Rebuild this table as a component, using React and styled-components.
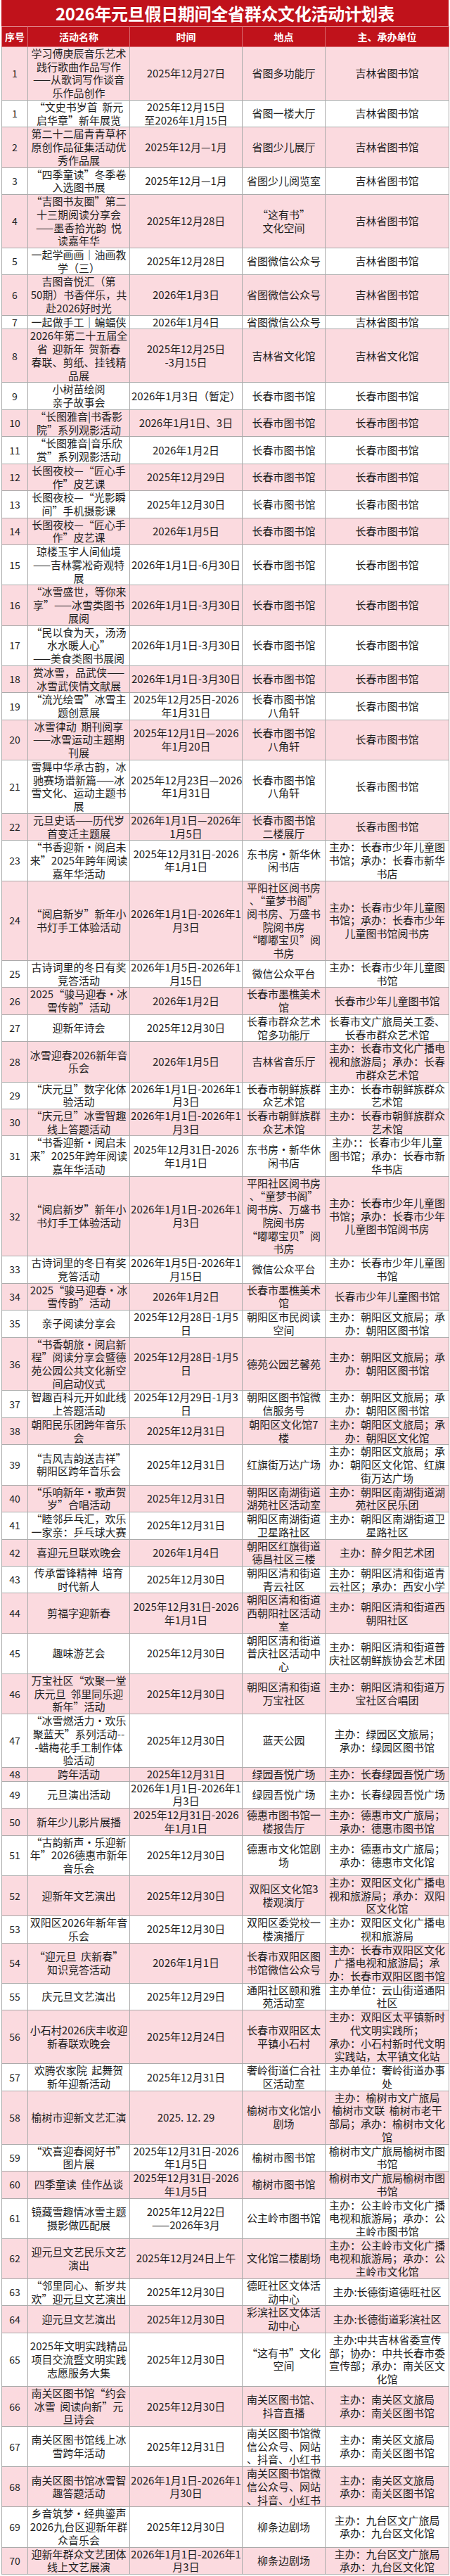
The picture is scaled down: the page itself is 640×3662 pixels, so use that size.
import React from "react";
import styled, { createGlobalStyle } from "styled-components";

const Global = createGlobalStyle`
  html, body { margin: 0; padding: 0; background: #ffffff; }
  body { font-family: "Noto Sans CJK SC", "Noto Sans", sans-serif; color: #1c1c1c; }
`;

const Page = styled.div`
  width: 640px;
  padding: 0 2px 3px 2px;
  box-sizing: border-box;
`;

const Title = styled.div`
  height: 37px;
  line-height: 37px;
  background: #c0121b;
  color: #ffffff;
  text-align: center;
  font-family: "Noto Sans CJK SC", sans-serif;
  font-weight: 700;
  font-size: 24px;
  letter-spacing: -0.3px;
  white-space: nowrap;
`;

const Table = styled.table`
  width: 636px;
  table-layout: fixed;
  border-collapse: collapse;
  font-family: "Noto Sans CJK SC", "Noto Sans", sans-serif;
`;

const HeadCell = styled.th`
  height: 28px;
  padding: 0;
  background: #c0121b;
  color: #ffffff;
  font-size: 14px;
  font-weight: 700;
  text-align: center;
  vertical-align: middle;
  border: 1px solid #d86a70;
  border-top: 1px solid #e08a8f;
  white-space: nowrap;
`;

const Row = styled.tr`
  background: ${(p) => (p.$pink ? "#fbdadf" : "#ffffff")};
`;

const Cell = styled.td`
  padding: 0 1px;
  font-size: 15px;
  line-height: 18.74px;
  text-align: center;
  vertical-align: middle;
  white-space: pre;
  overflow: visible;
  border: 1px solid #ababab;
  color: #1e1e1e;
`;

const NumCell = styled(Cell)`
  font-size: 14px;
`;

const CBK = "长春市图书馆";
const JL = "吉林省图书馆";
const T_24 = [
  "“阅启新岁”新年小\n书灯手工体验活动",
  "2026年1月1日-2026年1\n月3日",
  "平阳社区阅书房\n、“童梦书阁”\n阅书房、万盛书\n院阅书房\n“嘟嘟宝贝”阅\n书房",
  "主办：长春市少年儿童图\n书馆；承办：长春市少年\n儿童图书馆阅书房",
];
const T_25 = [
  "古诗词里的冬日有奖\n竞答活动",
  "2026年1月5日-2026年1\n月15日",
  "微信公众平台",
  "主办：长春市少年儿童图\n书馆",
];
const T_26 = [
  "2025“骏马迎春·冰\n雪传韵”活动",
  "2026年1月2日",
  "长春市墨樵美术\n馆",
  "长春市少年儿童图书馆",
];
const CY = "主办：朝阳区文旅局；承\n办：朝阳区图书馆";
const NG_PLACE = "南关区图书馆微\n信公众号、网站\n、抖音、小红书";
const NG_ORG = "主办：南关区文旅局\n承办：南关区图书馆";
const YS_ORG = "榆树市文广旅局榆树市图\n书馆";
const JT_ORG = "主办：九台区文广旅局\n承办：九台区文化馆";

const rows = [
  ["1", "学习傅庚辰音乐艺术\n践行歌曲作品写作\n——从歌词写作谈音\n乐作品创作", "2025年12月27日", "省图多功能厅", JL],
  ["1", "“文史书岁首  新元\n启华章”新年展览", "2025年12月15日\n至2026年1月15日", "省图一楼大厅", JL],
  ["2", "第二十二届青青草杯\n原创作品征集活动优\n秀作品展", "2025年12月—1月", "省图少儿展厅", JL],
  ["3", "“四季童读”冬季卷\n入选图书展", "2025年12月—1月", "省图少儿阅览室", JL],
  ["4", "“吉图书友圈”第二\n十三期阅读分享会\n——墨香拾光韵  悦\n读嘉年华", "2025年12月28日", "“这有书”\n文化空间", JL],
  ["5", "一起学画画｜油画教\n学（三）", "2025年12月28日", "省图微信公众号", JL],
  ["6", "吉图音悦汇（第\n50期）书香伴乐，共\n赴2026好时光", "2026年1月3日", "省图微信公众号", JL],
  ["7", "一起做手工｜蝙蝠侠", "2026年1月4日", "省图微信公众号", JL],
  ["8", "2026年第二十五届全\n省  迎新年  贺新春\n春联、剪纸、挂钱精\n品展", "2025年12月25日\n-3月15日", "吉林省文化馆", "吉林省文化馆"],
  ["9", "小树苗绘阅\n亲子故事会", "2026年1月3日（暂定）", CBK, CBK],
  ["10", "“长图雅音|书香影\n院”系列观影活动", "2026年1月1日、3日", CBK, CBK],
  ["11", "“长图雅音|音乐欣\n赏”系列观影活动", "2026年1月2日", CBK, CBK],
  ["12", "长图夜校—“匠心手\n作”皮艺课", "2025年12月29日", CBK, CBK],
  ["13", "长图夜校—“光影瞬\n间”手机摄影课", "2025年12月30日", CBK, CBK],
  ["14", "长图夜校—“匠心手\n作”皮艺课", "2026年1月5日", CBK, CBK],
  ["15", "琼楼玉宇人间仙境\n——吉林雾凇奇观特\n展", "2026年1月1日-6月30日", CBK, CBK],
  ["16", "“冰雪盛世，等你来\n享”——冰雪类图书\n展阅", "2026年1月1日-3月30日", CBK, CBK],
  ["17", "“民以食为天，汤汤\n水水暖人心”\n——美食类图书展阅", "2026年1月1日-3月30日", CBK, CBK],
  ["18", "赏冰雪，品武侠——\n冰雪武侠情文献展", "2026年1月1日-3月30日", CBK, CBK],
  ["19", "“流光绘雪”冰雪主\n题创意展", "2025年12月25日-2026\n年1月31日", "长春市图书馆\n八角轩", CBK],
  ["20", "冰雪律动  期刊阅享\n——冰雪运动主题期\n刊展", "2025年12月1日—2026\n年1月20日", "长春市图书馆\n八角轩", CBK],
  ["21", "雪舞中华承古韵，冰\n驰赛场谱新篇——冰\n雪文化、运动主题书\n展", "2025年12月23日—2026\n年1月31日", "长春市图书馆\n八角轩", CBK],
  ["22", "元旦史话——历代岁\n首变迁主题展", "2026年1月1日—2026年\n1月5日", "长春市图书馆\n二楼展厅", CBK],
  ["23", "“书香迎新·阅启未\n来”2025年跨年阅读\n嘉年华活动", "2025年12月31日-2026\n年1月1日", "东书房·新华休\n闲书店", "主办：长春市少年儿童图\n书馆；承办：长春市新华\n书店"],
  ["24", ...T_24],
  ["25", ...T_25],
  ["26", ...T_26],
  ["27", "迎新年诗会", "2025年12月30日", "长春市群众艺术\n馆多功能厅", "长春市文广旅局关工委、\n长春市群众艺术馆"],
  ["28", "冰雪迎春2026新年音\n乐会", "2026年1月5日", "吉林省音乐厅", "主办：长春市文化广播电\n视和旅游局；承办：长春\n市群众艺术馆"],
  ["29", "“庆元旦”数字化体\n验活动", "2026年1月1日-2026年1\n月3日", "长春市朝鲜族群\n众艺术馆", "主办：长春市朝鲜族群众\n艺术馆"],
  ["30", "“庆元旦”冰雪智趣\n线上答题活动", "2026年1月1日-2026年1\n月3日", "长春市朝鲜族群\n众艺术馆", "主办：长春市朝鲜族群众\n艺术馆"],
  ["31", "“书香迎新·阅启未\n来”2025年跨年阅读\n嘉年华活动", "2025年12月31日-2026\n年1月1日", "东书房·新华休\n闲书店", "主办：：长春市少年儿童\n图书馆；承办：长春市新\n华书店"],
  ["32", ...T_24],
  ["33", ...T_25],
  ["34", ...T_26],
  ["35", "亲子阅读分享会", "2025年12月28日-1月5\n日", "朝阳区市民阅读\n空间", CY],
  ["36", "“书香朝旅·阅启新\n程”阅读分享会暨德\n苑公园公共文化新空\n间启动仪式", "2025年12月28日-1月5\n日", "德苑公园艺馨苑", CY],
  ["37", "智趣百科元开如此线\n上答题活动", "2025年12月29日-1月3\n日", "朝阳区图书馆微\n信服务号", CY],
  ["38", "朝阳民乐团跨年音乐\n会", "2025年12月31日", "朝阳区文化馆7\n楼", "主办：朝阳区文旅局；承\n办：朝阳区文化馆"],
  ["39", "“吉风吉韵送吉祥”\n朝阳区跨年音乐会", "2025年12月31日", "红旗街万达广场", "主办：朝阳区文旅局；承\n办：朝阳区文化馆、红旗\n街万达广场"],
  ["40", "“乐响新年·歌声贺\n岁”合唱活动", "2025年12月31日", "朝阳区南湖街道\n湖苑社区活动室", "主办：朝阳区南湖街道湖\n苑社区民乐团"],
  ["41", "“睦邻乒乓汇，欢乐\n一家亲：乒乓球大赛", "2025年12月31日", "朝阳区南湖街道\n卫星路社区", "主办：朝阳区南湖街道卫\n星路社区"],
  ["42", "喜迎元旦联欢晚会", "2026年1月4日", "朝阳区红旗街道\n德昌社区三楼", "主办：醉夕阳艺术团"],
  ["43", "传承雷锋精神  培育\n时代新人", "2025年12月30日", "朝阳区清和街道\n青云社区", "主办：朝阳区清和街道青\n云社区；承办：西安小学"],
  ["44", "剪福字迎新春", "2025年12月31日-2026\n年1月1日", "朝阳区清和街道\n西朝阳社区活动\n室", "主办：朝阳区清和街道西\n朝阳社区"],
  ["45", "趣味游艺会", "2025年12月30日", "朝阳区清和街道\n普庆社区活动中\n心", "主办：朝阳区清和街道普\n庆社区朝鲜族协会艺术团"],
  ["46", "万宝社区“欢聚一堂\n庆元旦  邻里同乐迎\n新年”活动", "2025年12月30日", "朝阳区清和街道\n万宝社区", "主办：朝阳区清和街道万\n宝社区合唱团"],
  ["47", "“冰雪燃活力·欢乐\n聚蓝天”系列活动--\n-蜡梅花手工制作体\n验活动", "2025年12月30日", "蓝天公园", "主办：绿园区文旅局；\n承办：绿园区图书馆"],
  ["48", "跨年活动", "2025年12月31日", "绿园吾悦广场", "主办：长春绿园吾悦广场"],
  ["49", "元旦演出活动", "2026年1月1日-2026年1\n月3日", "绿园吾悦广场", "主办：长春绿园吾悦广场"],
  ["50", "新年少儿影片展播", "2025年12月31日-2026\n年1月1日", "德惠市图书馆一\n楼报告厅", "主办：德惠市文广旅局；\n承办：德惠市图书馆"],
  ["51", "“古韵新声·乐迎新\n年”2026德惠市新年\n音乐会", "2025年12月30日", "德惠市文化馆剧\n场", "主办：德惠市文广旅局；\n承办：德惠市文化馆"],
  ["52", "迎新年文艺演出", "2025年12月30日", "双阳区文化馆3\n楼观演厅", "主办：双阳区文化广播电\n视和旅游局；承办：双阳\n区文化馆"],
  ["53", "双阳区2026年新年音\n乐会", "2025年12月30日", "双阳区委党校一\n楼演播厅", "主办：双阳区文化广播电\n视和旅游局"],
  ["54", "“迎元旦  庆新春”\n知识竞答活动", "2026年1月1日", "长春市双阳区图\n书馆微信公众号", "主办：长春市双阳区文化\n广播电视和旅游局；承\n办：长春市双阳区图书馆"],
  ["55", "庆元旦文艺演出", "2025年12月29日", "通阳社区颐和雅\n苑活动室", "主办单位：云山街道通阳\n社区"],
  ["56", "小石村2026庆丰收迎\n新春联欢晚会", "2025年12月24日", "长春市双阳区太\n平镇小石村", "主办：双阳区太平镇新时\n代文明实践所；\n承办：小石村新时代文明\n实践站，太平镇文化站"],
  ["57", "欢腾农家院  起舞贺\n新年迎新活动", "2025年12月31日", "奢岭街道仁合社\n区活动室", "主办单位：奢岭街道办事\n处"],
  ["58", "榆树市迎新文艺汇演", "2025. 12. 29", "榆树市文化馆小\n剧场", "主办：榆树市文广旅局\n榆树市文联  榆树市老干\n部局；承办：榆树市文化\n馆"],
  ["59", "“欢喜迎春阅好书”\n图片展", "2025年12月31日-2026\n年1月5日", "榆树市图书馆", YS_ORG],
  ["60", "四季童读  佳作丛谈", "2025年12月31日-2026\n年1月5日", "榆树市图书馆", YS_ORG],
  ["61", "镜藏雪趣情冰雪主题\n摄影做匹配展", "2025年12月22日\n——2026年3月", "公主岭市图书馆", "主办：公主岭市文化广播\n电视和旅游局；承办：公\n主岭市图书馆"],
  ["62", "迎元旦文艺民乐文艺\n演出", "2025年12月24日上午", "文化馆二楼剧场", "主办：公主岭市文化广播\n电视和旅游局；承办：公\n主岭市文化馆"],
  ["63", "“邻里同心、新岁共\n欢”迎元旦文艺演出", "2025年12月30日", "德旺社区文体活\n动中心", "主办:长德街道德旺社区"],
  ["64", "迎元旦文艺演出", "2025年12月30日", "彩滨社区文体活\n动中心", "主办:长德街道彩滨社区"],
  ["65", "2025年文明实践精品\n项目交流暨文明实践\n志愿服务大集", "2025年12月30日", "“这有书”文化\n空间", "主办:中共吉林省委宣传\n部；协办：中共长春市委\n宣传部；承办：南关区文\n化馆"],
  ["66", "南关区图书馆“约会\n冰雪  阅读向新”元\n旦诗会", "2025年12月30日", "南关区图书馆、\n抖音直播", NG_ORG],
  ["67", "南关区图书馆线上冰\n雪跨年活动", "2025年12月31日", NG_PLACE, NG_ORG],
  ["68", "南关区图书馆冰雪智\n趣答题活动", "2026年1月1日-2026年1\n月30日", NG_PLACE, NG_ORG],
  ["69", "乡音筑梦·经典鎏声\n2026九台区迎新年群\n众音乐会", "2025年12月30日", "柳条边剧场", JT_ORG],
  ["70", "迎新年群众文艺团体\n线上文艺展演", "2026年1月1日-2026年1\n月3日", "柳条边剧场", JT_ORG],
];

const headers = ["序号", "活动名称", "时间", "地点", "主、承办单位"];
const widths = [37, 145, 160, 118, 176];

export default function App() {
  return (
    <Page>
      <Global />
      <Title>2026年元旦假日期间全省群众文化活动计划表</Title>
      <Table>
        <colgroup>
          {widths.map((w, i) => (
            <col key={i} style={{ width: w }} />
          ))}
        </colgroup>
        <thead>
          <tr>
            {headers.map((h) => (
              <HeadCell key={h}>{h}</HeadCell>
            ))}
          </tr>
        </thead>
        <tbody>
          {rows.map((r, i) => (
            <Row key={i} $pink={i % 2 === 0}>
              <NumCell>{r[0]}</NumCell>
              <Cell>{r[1]}</Cell>
              <Cell>{r[2]}</Cell>
              <Cell>{r[3]}</Cell>
              <Cell>{r[4]}</Cell>
            </Row>
          ))}
        </tbody>
      </Table>
    </Page>
  );
}
